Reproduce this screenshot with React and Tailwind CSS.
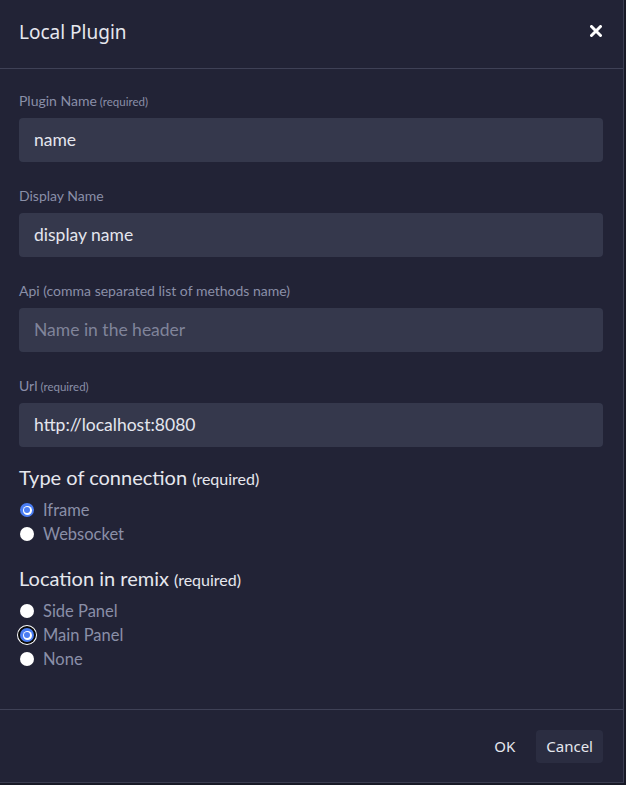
export default function App() {
  const body = { fontFamily: '"Lato", "Open Sans", sans-serif' };
  const sys = { fontFamily: '"Noto Sans", "Open Sans", sans-serif' };
  const fields = [
    { label: "Plugin Name", req: true, value: "name" },
    { label: "Display Name", req: false, value: "display name" },
    { label: "Api (comma separated list of methods name)", req: false, placeholder: "Name in the header" },
    { label: "Url", req: true, value: "http://localhost:8080" },
  ];
  return (
    <div className="w-[626px] h-[785px] bg-[#181926] overflow-hidden" style={body}>
      <div className="w-[624px] h-[783px] bg-[#222336] border-r border-b border-[#3a3c50] flex flex-col">
        <div className="h-[69px] flex items-center justify-between pl-[19px] pr-[21px] border-b border-[#3f4156] shrink-0">
          <div className="text-[19px] text-[#e6e7ee] mt-[-3px]" style={sys}>Local Plugin</div>
          <svg width="12" height="12" viewBox="0 0 12 12" className="mt-[-7px]">
            <path d="M1.5 1.5 L10.5 10.5 M10.5 1.5 L1.5 10.5" stroke="#ffffff" strokeWidth="3" strokeLinecap="round" />
          </svg>
        </div>
        <div className="flex-1 px-[19px] pr-[20px] pt-[23px]">
          {fields.map((f, i) => (
            <div key={i} className="mb-[25px] h-[70px]">
              <div className="text-[14px] leading-[18px] text-[#8a8fa8] h-[18px]">
                {f.label}
                {f.req && <span className="text-[11.5px] ml-[3px]">(required)</span>}
              </div>
              <div className="mt-[8px] h-[44px] rounded-[4px] bg-[#35384c] flex items-center px-[15px] text-[17.5px]">
                {f.value ? (
                  <span className="text-[#e4e6ee]">{f.value}</span>
                ) : (
                  <span className="text-[#80849a]">{f.placeholder}</span>
                )}
              </div>
            </div>
          ))}
          <div className="mt-[-7px]">
            <div className="text-[20px] leading-[24px] text-[#e6e7ee]">
              Type of connection <span className="text-[16px]">(required)</span>
            </div>
            <div className="mt-[7px] flex flex-col">
              <Radio label="Iframe" checked />
              <Radio label="Websocket" />
            </div>
          </div>
          <div className="mt-[20px]">
            <div className="text-[20px] leading-[24px] text-[#e6e7ee]">
              Location in remix <span className="text-[16px]">(required)</span>
            </div>
            <div className="mt-[7px] flex flex-col">
              <Radio label="Side Panel" />
              <Radio label="Main Panel" checked focus />
              <Radio label="None" />
            </div>
          </div>
        </div>
        <div className="h-[73px] border-t border-[#3f4156] flex items-center justify-end pr-[20px] gap-[9px] shrink-0" style={sys}>
          <div className="px-[12px] h-[33px] flex items-center text-[15px] text-[#e6e7ee]">OK</div>
          <div className="px-[10px] h-[33px] flex items-center rounded-[4px] bg-[#2b2d41] text-[15px] text-[#e6e7ee]">Cancel</div>
        </div>
      </div>
    </div>
  );
}

function Radio({ label, checked, focus }) {
  return (
    <label className="flex items-center h-[24px]">
      <span
        className={
          "w-[18px] h-[18px] ml-[-1px] flex items-center justify-center rounded-full " +
          (focus ? "bg-[#0a0a0a] ring-1 ring-white" : "")
        }
      >
        <span
          className={
            "w-[14px] h-[14px] rounded-full flex items-center justify-center " +
            (checked ? "bg-[#4a7df4]" : "bg-white")
          }
        >
          {checked && <span className="w-[9px] h-[9px] rounded-full bg-white flex items-center justify-center"><span className="w-[6px] h-[6px] rounded-full bg-[#4a7df4]" /></span>}
        </span>
      </span>
      <span className="ml-[7px] text-[16.5px] text-[#8a8fa8]">{label}</span>
    </label>
  );
}
